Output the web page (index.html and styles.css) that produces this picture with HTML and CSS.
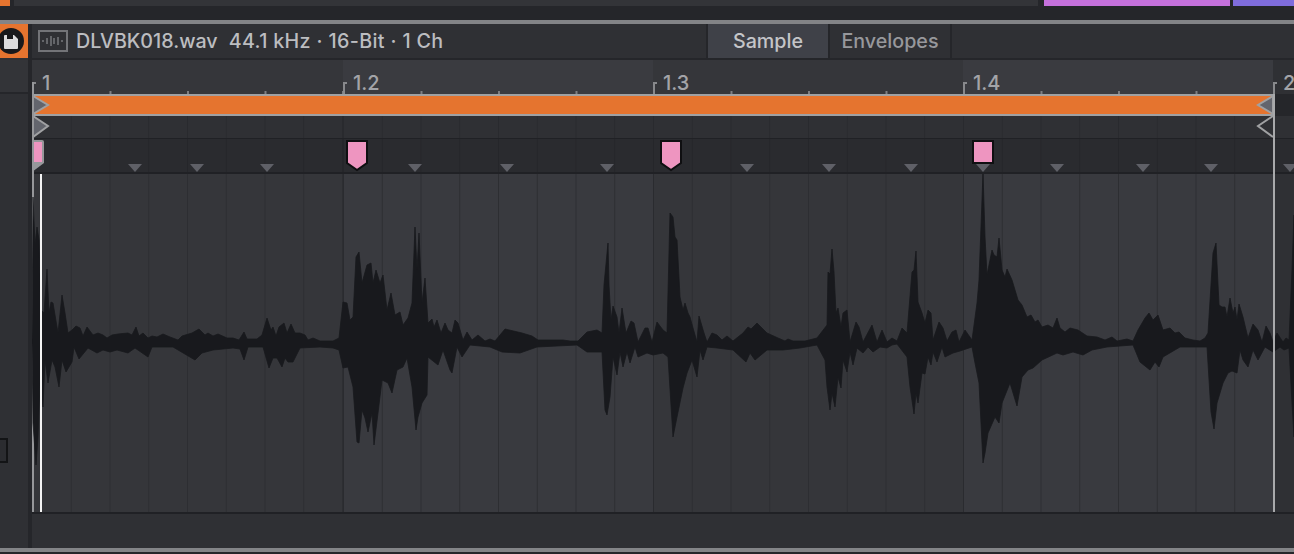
FILE: index.html
```html
<!DOCTYPE html>
<html lang="en">
<head>
    <meta charset="UTF-8">
    <meta name="viewport" content="width=device-width, initial-scale=1.0">
    <title>DLVBK018.wav</title>
    <link rel="stylesheet" href="styles.css">
</head>
<body>
    <div class="clip-strip">
        <div class="clip clip-orange"></div>
        <div class="clip clip-grey"></div>
        <div class="clip clip-purple"></div>
        <div class="clip clip-blue"></div>
    </div>
    <div class="top-gap"></div>
    <div class="rule"></div>

    <div class="editor">
        <div class="side">
            <div class="save">
                <svg width="28" height="34" viewBox="0 0 28 34">
                    <circle cx="11" cy="17" r="13" fill="#18191c"/>
                    <path d="M4 12 a1 1 0 0 1 1-1 h9 l4 4 v9 a1 1 0 0 1-1 1 h-12 a1 1 0 0 1-1-1 z" fill="#dcdcde"/>
                    <rect x="7" y="11" width="6" height="4" fill="#18191c"/>
                </svg>
            </div>
            <div class="side-head"></div>
            <div class="side-body"><div class="side-box"></div></div>
        </div>

        <div class="main">
            <div class="header">
                <svg class="wave-icon" width="30" height="22" viewBox="0 0 30 22">
                    <rect x="1" y="1" width="28" height="20" fill="none" stroke="#737478" stroke-width="2"/>
                    <path d="M5 10v2M9 8v6M13 6v10M16 8v6M20 7v8M24 10v2" stroke="#9a9b9f" stroke-width="1"/>
                </svg>
                <span class="file-name">DLVBK018.wav</span>
                <span class="file-info">44.1 kHz · 16-Bit · 1 Ch</span>
                <div class="tabs">
                    <div class="tab tab-on">Sample</div>
                    <div class="tab">Envelopes</div>
                </div>
            </div>

            <div class="timeline">
                <div class="row ruler">
                    <div class="bar bar-first"><span>1</span></div>
                    <div class="bar bar-light"><span>1.2</span></div>
                    <div class="bar"><span>1.3</span></div>
                    <div class="bar bar-light"><span>1.4</span></div>
                    <div class="tail"><span>2</span></div>
                </div>

                <div class="row loop-bar"></div>

                <div class="row lane">
                    <div class="bar bar-first"></div>
                    <div class="bar"></div>
                    <div class="bar"></div>
                    <div class="bar"></div>
                    <div class="tail"></div>
                </div>

                <div class="row markers">
                    <div class="bar bar-first"></div>
                    <div class="bar"></div>
                    <div class="bar"></div>
                    <div class="bar"></div>
                    <div class="tail"></div>
                    <svg class="art" width="1262" height="33" viewBox="32 139 1262 33">
                        <g fill="#5f6067">
                            <path d="M128 164h14l-7 8zM190 164h14l-7 8zM260 164h14l-7 8zM408 164h14l-7 8zM500 164h14l-7 8zM600 164h14l-7 8zM740 164h14l-7 8zM822 164h14l-7 8zM904 164h14l-7 8zM976 164h14l-7 8zM1050 164h14l-7 8zM1136 164h14l-7 8zM1204 164h14l-7 8zM1283 164h14l-7 8z"/>
                        </g>
                        <g fill="#ee95c0" stroke="#0f0f11" stroke-width="2">
                            <path d="M347 141h20v22l-10 7-10-7z"/>
                            <path d="M661 141h20v22l-10 7-10-7z"/>
                            <path d="M973 141h20v22h-20z"/>
                        </g>
                        <path d="M32 140h10a2 2 0 0 1 2 2v21l-12 9z" fill="#96979a"/>
                        <rect x="32" y="142" width="10" height="20" fill="#ee95c0"/>
                    </svg>
                </div>

                <div class="row wave">
                    <div class="bar bar-first"></div>
                    <div class="bar bar-light"></div>
                    <div class="bar"></div>
                    <div class="bar bar-light"></div>
                    <div class="tail"></div>
                    <svg class="art" width="1262" height="338" viewBox="32 174 1262 338">
                        <rect x="32" y="174" width="2" height="338" fill="#96979a"/>
                        <path fill="#18191d" stroke="#18191d" stroke-width="0.8" stroke-linejoin="round" d="M32 342L33 197 35 245 37 227 39 240 41 310 44 313 47 269 49 313 51 302 53 303 58 333 62 295 65 313 68 333 72 330 76 326 80 328 83 336 87 327 93 335 98 333 103 335 107 338 112 335 118 334 128 333 132 335 136 327 139 336 143 333 148 338 152 336 157 337 163 334 170 337 178 340 182 336 192 333 199 329 205 335 208 333 213 336 218 334 227 338 233 338 239 340 244 332 247 339 257 339 262 335 267 318 271 330 273 327 276 336 279 327 284 323 287 333 291 324 295 333 300 333 305 335 308 340 313 338 320 341 333 341 339 338 343 302 347 303 350 320 353 317 356 257 359 252 362 283 367 265 371 263 373 283 376 270 380 283 383 275 387 310 391 293 395 315 400 312 403 325 408 318 412 303 415 227 417 270 419 233 422 303 425 278 428 323 432 319 434 327 437 320 441 333 445 323 448 330 452 333 455 320 458 323 463 340 467 332 472 340 478 335 485 341 490 339 495 341 505 329 522 333 532 336 538 340 550 340 563 340 570 341 578 341 587 332 597 330 602 333 604 285 608 243 609 285 611 320 613 306 617 317 619 333 622 308 626 333 631 321 634 323 638 342 645 328 648 328 652 342 657 322 663 330 667 333 670 213 673 217 675 237 677 240 680 297 683 310 685 303 688 313 690 317 693 328 697 342 699 316 704 333 707 342 712 333 717 335 722 340 727 336 733 341 743 333 748 327 751 329 757 323 767 333 778 338 785 341 788 339 793 341 800 341 805 341 817 338 827 325 828 272 830 274 832 249 834 272 836 313 838 308 841 327 843 313 847 310 850 342 856 322 859 327 863 342 872 325 877 342 882 330 887 342 892 338 897 341 902 328 907 333 912 272 914 270 916 251 918 302 922 313 925 323 928 310 931 313 933 340 939 322 943 328 947 341 952 332 956 330 959 342 965 330 972 340 977 303 979 280 983 173 985 237 987 275 992 250 994 255 997 257 999 238 1002 270 1005 277 1007 269 1012 280 1018 300 1022 305 1027 317 1031 315 1035 322 1038 320 1042 327 1048 325 1053 328 1057 318 1060 328 1065 332 1070 328 1078 330 1087 336 1097 337 1105 340 1112 337 1117 341 1127 339 1133 341 1138 330 1145 318 1149 313 1153 320 1158 315 1163 330 1170 328 1175 333 1179 332 1185 338 1193 340 1200 341 1205 338 1208 333 1213 253 1216 243 1219 305 1222 307 1225 307 1227 317 1230 298 1233 313 1235 307 1237 320 1239 304 1243 317 1248 338 1253 324 1258 330 1262 342 1266 326 1270 333 1273 342 1277 333 1283 342 1286 338 1289 340 1292 270 1294 215 1294 437 1292 403 1289 348 1284 350 1280 347 1273 352 1265 347 1258 360 1253 350 1248 367 1243 360 1240 350 1237 373 1232 371 1228 373 1223 383 1217 403 1214 429 1211 412 1207 347 1180 347 1163 357 1159 367 1155 362 1150 370 1140 362 1133 345 1107 347 1092 350 1083 355 1073 352 1063 355 1057 353 1042 360 1033 368 1028 370 1022 377 1017 406 1010 383 1002 403 999 423 995 417 988 433 985 453 983 463 979 383 975 363 972 347 960 351 953 353 945 357 942 347 937 362 933 352 931 365 928 357 925 374 922 373 918 403 916 393 914 414 910 387 907 357 897 344 892 345 887 348 880 347 873 352 868 347 863 353 857 348 853 365 850 352 847 372 843 360 841 388 838 377 835 407 832 393 830 410 827 387 825 360 817 345 800 348 783 350 767 350 755 360 750 353 746 362 733 350 717 348 707 347 703 360 700 350 697 377 692 360 687 373 683 388 677 417 673 437 668 357 663 353 653 355 647 353 638 357 635 347 630 363 627 352 623 367 620 352 617 375 613 357 610 397 607 415 605 410 602 352 587 352 577 345 537 347 520 353 502 352 490 347 470 345 462 357 457 347 452 373 450 370 443 350 438 365 428 357 427 395 422 403 418 417 416 430 412 387 407 358 403 367 397 370 392 393 388 383 382 380 378 413 374 445 372 413 368 432 365 418 362 410 359 443 357 442 353 387 348 367 343 368 339 350 333 348 320 347 300 348 293 362 288 362 285 358 282 367 277 358 273 358 269 368 263 347 248 347 244 360 240 349 233 348 213 350 202 353 195 360 173 347 152 347 148 357 135 348 128 353 117 350 110 352 103 350 97 353 88 348 79 359 74 347 72 362 66 372 62 360 59 387 55 367 52 360 48 383 45 360 43 407 40 383 38 437 36 465 33 423 32 342z"/>
                    </svg>
                    <div class="playhead"></div>
                </div>

                <div class="footer"></div>

                <svg class="art lane-art" width="1262" height="44" viewBox="32 94 1262 44">
                    <path d="M33 96l15 9-15 9zM33 116l15 10-15 11z" fill="#63656d" stroke="#a0a1a3" stroke-width="2"/>
                    <path d="M1273 96l-15 9 15 9z" fill="#63656d" stroke="#a0a1a3" stroke-width="2"/>
                    <path d="M1273 116l-15 10 15 11" fill="none" stroke="#a0a1a3" stroke-width="2"/>
                </svg>
                <div class="edge-left"></div>
                <div class="edge-right"></div>
            </div>
        </div>
    </div>

    <div class="rule rule-bottom"></div>
    <div class="bottom-gap"></div>
</body>
</html>
```

FILE: styles.css
```css
html, body { margin: 0; padding: 0; }
body { width: 1294px; height: 554px; overflow: hidden; background: #25262a; font-family: Inter, "Noto Sans", sans-serif; color: #bcbdc0; }

.clip-strip { display: flex; height: 6px; background: #25262a; }
.clip { height: 6px; }
.clip-orange { width: 10px; background: #e5742f; margin-right: 4px; }
.clip-grey { width: 1024px; background: #333438; margin-right: 6px; }
.clip-purple { width: 186px; background: #c571dc; margin-right: 3px; }
.clip-blue { flex: 1; background: #7f6cdc; }
.top-gap { height: 14px; }
.rule { height: 4px; background: #838487; }
.bottom-gap { height: 2px; }

.editor { display: flex; height: 524px; }

.side { width: 28px; background: #2f3034; border-right: 4px solid #25262a; display: flex; flex-direction: column; }
.save { height: 34px; background: #e5742f; }
.save svg { display: block; }
.side-head { height: 32px; margin-top: 2px; background: #333438; border-bottom: 2px solid #25262a; }
.side-body { flex: 1; }
.side-box { width: 6px; height: 21px; margin-top: 344px; background: #2b2c30; border: 2px solid #131416; border-left: 0; }

.main { flex: 1; min-width: 0; display: flex; flex-direction: column; }

.header { height: 34px; display: flex; align-items: center; padding-left: 6px; background: #2f3034; border-bottom: 2px solid #25262a; font-size: 19.7px; font-weight: 500; }
.wave-icon { flex: none; margin-right: 8px; }
.file-name { margin-right: 11px; }
.file-info { letter-spacing: 0.35px; }
.tabs { display: flex; height: 34px; margin-left: auto; margin-right: 342px; }
.tab { width: 122px; box-sizing: border-box; border-left: 2px solid #25262a; text-align: center; line-height: 34px; color: #97989c; }
.tab:last-child { border-right: 2px solid #25262a; width: 124px; }
.tab-on { background: #3f4148; color: #c4c5c8; }

.timeline { position: relative; flex: 1; display: flex; flex-direction: column; }

.row { position: relative; display: flex; flex: none; }
.bar { width: 310px; flex: none; }
.bar-first { width: 311px; }
.tail { flex: 1; }

.ruler { height: 34px; background: #35363a; font-size: 20px; font-weight: 500; color: #a3a4a8; }
.ruler .bar, .ruler .tail { position: relative; box-sizing: border-box; padding: 13px 0 0 10px; line-height: 20px; background: linear-gradient(to right, #7d7e82 2px, transparent 2px) 0 100% / 77.5px 3px repeat-x; }
.ruler .bar::before, .ruler .tail::before { content: ""; position: absolute; left: 0; bottom: 0; width: 4px; height: 12px; border-left: 2px solid #88898c; border-top: 2px solid #88898c; box-sizing: border-box; }
.ruler .bar-light { background-color: #3a3b40; }
.ruler .tail { background: #2f3034; }

.loop-bar { height: 18px; margin-left: 1px; margin-right: 21px; background: #e5742f; border-top: 2px solid #a0a1a3; border-bottom: 2px solid #a0a1a3; }

.lane, .markers, .wave { --line: #292a2e; }
.lane .bar, .markers .bar, .wave .bar { background-image: linear-gradient(to right, var(--line) 1px, transparent 1px); background-size: 38.75px 100%; }

.lane { height: 22px; background: #2f3034; border-bottom: 1px solid #202125; }
.markers { height: 33px; background: #2a2b2f; border-bottom: 2px solid #202125; --line: #25262a; }
.wave { height: 338px; background: #2f3034; border-bottom: 2px solid #202125; --line: #2d2e32; }
.wave .bar { background-color: #35363a; }
.wave .bar-light { background-color: #393a3f; }
.wave .bar + .bar { box-shadow: inset 1px 0 0 #2a2b2f; }

.art { position: absolute; left: 0; top: 0; }
.lane-art { top: 34px; }
.playhead { position: absolute; left: 8px; top: 0; bottom: 0; width: 2px; background: #f4f4f4; }
.edge-left { position: absolute; left: 0; top: 22px; height: 92px; width: 2px; background: #96979a; }
.edge-right { position: absolute; left: 1241px; top: 34px; height: 418px; width: 2px; background: #a8a9ab; }

.footer { flex: 1; background: #2f3034; }
```
